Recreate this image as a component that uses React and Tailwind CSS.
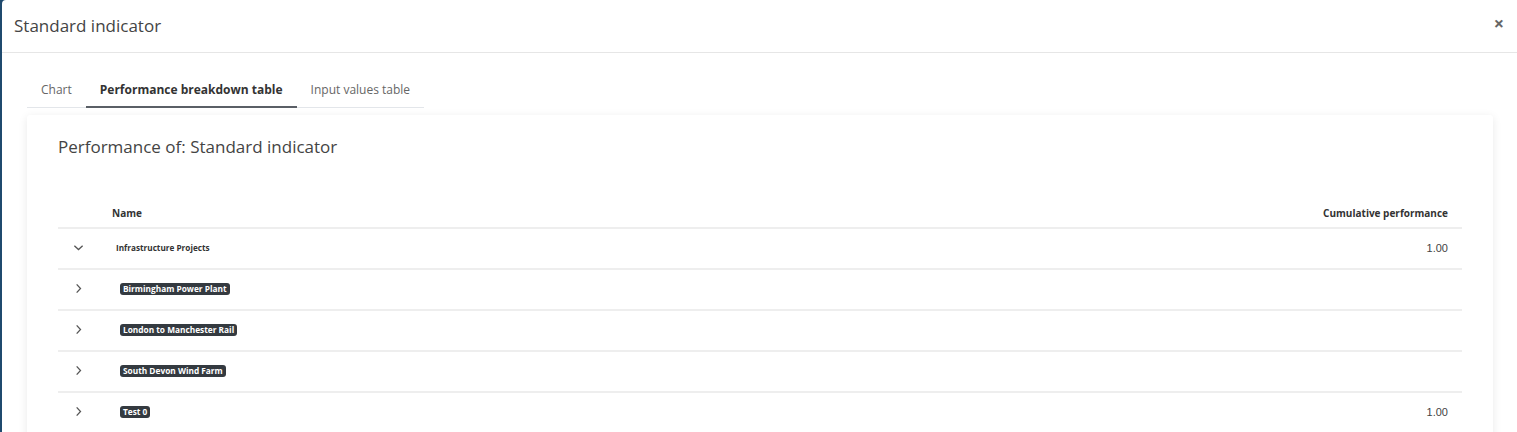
import React, { useState } from 'react';

const rows = [
  { id: 'infra', name: 'Infrastructure Projects', value: '1.00', open: true, badge: false },
  { id: 'bpp', name: 'Birmingham Power Plant', value: '', badge: true },
  { id: 'lmr', name: 'London to Manchester Rail', value: '', badge: true },
  { id: 'sdwf', name: 'South Devon Wind Farm', value: '', badge: true },
  { id: 't0', name: 'Test 0', value: '1.00', badge: true },
];

const Chevron = ({ open }) => (
  <svg width="11" height="11" viewBox="0 0 12 12" className="text-[#555]">
    {open ? (
      <path d="M1.5 4 L6 8.2 L10.5 4" fill="none" stroke="currentColor" strokeWidth="1.4" />
    ) : (
      <path d="M4 1.5 L8.2 6 L4 10.5" fill="none" stroke="currentColor" strokeWidth="1.4" />
    )}
  </svg>
);

const App = () => {
  const [tab, setTab] = useState('breakdown');
  const tabs = [
    { id: 'chart', label: 'Chart' },
    { id: 'breakdown', label: 'Performance breakdown table' },
    { id: 'inputs', label: 'Input values table' },
  ];

  return (
    <div className="h-[432px] w-full bg-[#1f4a6e] pl-[2px] overflow-hidden font-['Open_Sans',sans-serif]">
      <div className="h-full bg-white rounded-tl-[4px] flex flex-col">
        {/* Header */}
        <div className="h-[53px] flex items-center justify-between pl-[12px] pr-[13px] border-b border-[#e6e6e6] shrink-0">
          <h2 className="text-[17px] text-[#444] leading-none -mt-[2px]">Standard indicator</h2>
          <button className="text-[#666] text-[18px] font-bold leading-none pb-[6px]">×</button>
        </div>

        {/* Body */}
        <div className="pl-[25px] pr-[24px] pt-[20px]">
          <div className="flex w-fit border-b border-[#e3e6ea]">
            {tabs.map(t => (
              <button
                key={t.id}
                onClick={() => setTab(t.id)}
                className={
                  tab === t.id
                    ? 'h-[35px] px-[14px] text-[12px] font-bold text-[#333] border-b-2 border-[#5a5f66] -mb-px'
                    : 'h-[35px] px-[14px] text-[12px] text-[#666] border-b-2 border-transparent -mb-px'
                }
              >
                {t.label}
              </button>
            ))}
          </div>

          {/* Card */}
          <div className="mt-[7px] bg-white rounded-[3px] shadow-[0_2px_10px_rgba(0,0,0,0.09)] px-[31px] pt-[20px] pb-4">
            <h3 className="text-[17px] text-[#444] leading-[24px]">Performance of: Standard indicator</h3>

            <div className="mt-[48px]">
              <div className="flex items-end h-[14px] mb-[6px] pr-[14px]">
                <span className="pl-[54px] flex-1 text-[10px] font-bold text-[#333]">Name</span>
                <span className="text-[10px] font-bold text-[#333]">Cumulative performance</span>
              </div>
              <div className="border-t-2 border-[#eeeeee]">
                {rows.map(r => (
                  <div key={r.id} className="h-[41px] flex items-center border-b-2 border-[#eeeeee] pr-[14px]">
                    <span className="w-[58px] pl-[15px] flex items-center -mt-[3px]">
                      <Chevron open={r.open} />
                    </span>
                    <span className="flex-1 flex items-center -mt-[1px]">
                      {r.badge ? (
                        <span className="ml-[4px] bg-[#343a40] text-white text-[8.3px] font-bold leading-[12px] px-[3px] rounded-[3px]">
                          {r.name}
                        </span>
                      ) : (
                        <span className="text-[8.2px] font-bold text-[#333]">{r.name}</span>
                      )}
                    </span>
                    <span className="text-[11px] text-[#444] font-['Liberation_Sans',sans-serif]">{r.value}</span>
                  </div>
                ))}
              </div>
            </div>
          </div>
        </div>
      </div>
    </div>
  );
};

export default App;
